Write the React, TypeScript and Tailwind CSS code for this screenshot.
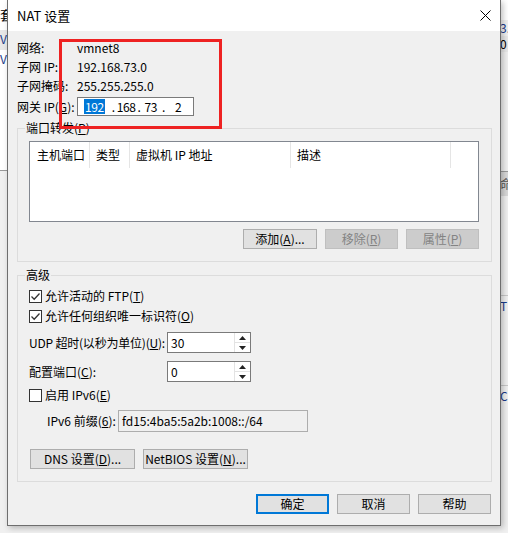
import React from 'react'

const font = { fontFamily: '"Noto Sans CJK SC", "Noto Sans", sans-serif' }

function Btn({ children, disabled, primary, className = '' }: { children: React.ReactNode; disabled?: boolean; primary?: boolean; className?: string }) {
  const tone = disabled
    ? 'bg-[#cccccc] border-[#bfbfbf] text-[#838383]'
    : primary
      ? 'bg-[#e1e1e1] border-2 border-[#0078d7] text-black'
      : 'bg-[#e1e1e1] border-[#adadad] text-black'
  return (
    <div className={`h-[20px] flex items-center justify-center border text-[12px] leading-none whitespace-nowrap ${tone} ${className}`}>
      {children}
    </div>
  )
}

function Check({ checked }: { checked?: boolean }) {
  return (
    <div className="w-[13px] h-[13px] border border-[#333333] bg-white flex items-center justify-center shrink-0">
      {checked && (
        <svg width="11" height="11" viewBox="0 0 11 11">
          <polyline points="1.5,5.5 4.2,8.2 9.5,2.5" fill="none" stroke="#333333" strokeWidth="1.3" />
        </svg>
      )}
    </div>
  )
}

function Spin({ value }: { value: string }) {
  return (
    <div className="w-[84px] h-[21px] border border-[#7a7a7a] bg-white flex shrink-0">
      <div className="flex-1 pl-[3px] flex items-center text-[12px]">{value}</div>
      <div className="w-[16px] flex flex-col border-l border-[#e3e3e3]">
        <div className="flex-1 flex items-center justify-center border-b border-[#e3e3e3]">
          <svg width="7" height="4" viewBox="0 0 7 4"><polygon points="0,4 7,4 3.5,0" fill="#222" /></svg>
        </div>
        <div className="flex-1 flex items-center justify-center">
          <svg width="7" height="4" viewBox="0 0 7 4"><polygon points="0,0 7,0 3.5,4" fill="#222" /></svg>
        </div>
      </div>
    </div>
  )
}

function Group({ title, className = '', children }: { title: React.ReactNode; className?: string; children: React.ReactNode }) {
  return (
    <div className={`relative border border-[#dcdcdc] ${className}`}>
      <div className="absolute -top-[9px] left-[7px] px-[1px] bg-[#f0f0f0] text-[12px] leading-[16px]">{title}</div>
      {children}
    </div>
  )
}

export default function App() {
  return (
    <div className="relative w-[508px] h-[533px] overflow-hidden bg-[#f0f0f0] text-black" style={font}>
      {/* the window behind the dialog */}
      <div className="flex h-full">
        <div className="w-[7px] flex flex-col overflow-hidden">
          <div className="h-[30px] bg-white text-[13px] leading-[30px] whitespace-nowrap">套</div>
          <div className="h-[20px] bg-[#e8e8e8] text-[12px] text-[#1a3a8a] whitespace-nowrap">V</div>
          <div className="h-[20px] bg-white text-[12px] text-[#1a3a8a] whitespace-nowrap">V</div>
          <div className="h-[100px] bg-white" />
          <div className="flex-1 border-t border-[#999]" />
        </div>
        <div className="flex-1" />
        <div className="w-[8px] flex flex-col overflow-hidden bg-[#f0f0f0] text-[12px] whitespace-nowrap">
          <div className="h-[20px] bg-white" />
          <div className="h-[16px] text-[#1a3a8a] leading-[16px]">3.</div>
          <div className="h-[16px] bg-[#e8e8e8] leading-[16px]">0</div>
          <div className="h-[120px] border-b border-[#999]" />
          <div className="h-[24px] bg-[#d8d8d8] leading-[24px] text-[#555]">命</div>
          <div className="h-[100px] border-b border-[#c8c8c8]" />
          <div className="h-[20px] leading-[20px] text-[#1a3a8a]">T</div>
          <div className="h-[70px] border-b border-[#c8c8c8]" />
          <div className="h-[20px] leading-[20px] text-[#1a3a8a]">C</div>
          <div className="flex-1" />
        </div>
      </div>

      {/* NAT 设置 dialog */}
      <div className="absolute left-[7px] top-0 w-[494px] h-[526px] flex flex-col border-x border-b border-[#6e6e6e] shadow-[2px_2px_6px_rgba(0,0,0,0.25)]">
        <div className="h-[31px] bg-white flex items-center justify-between pl-[9px] pr-[9px] shrink-0">
          <span className="text-[13px]">NAT 设置</span>
          <svg width="11" height="11" viewBox="0 0 11 11">
            <path d="M0.5 0.5 L10.5 10.5 M10.5 0.5 L0.5 10.5" stroke="#000" strokeWidth="1" />
          </svg>
        </div>

        <div className="flex-1 bg-[#f0f0f0] flex flex-col pl-[9px] pr-[8px] pt-[7px] text-[12px]">
          {/* network info */}
          <div className="flex flex-col">
            <div className="h-[19px] flex items-center"><span className="w-[60px]">网络:</span><span>vmnet8</span></div>
            <div className="h-[19px] flex items-center"><span className="w-[60px]">子网 IP:</span><span>192.168.73.0</span></div>
            <div className="h-[19px] flex items-center"><span className="w-[60px]">子网掩码:</span><span>255.255.255.0</span></div>
            <div className="h-[19px] mt-[2px] flex items-center">
              <span className="w-[60px] whitespace-nowrap">网关 IP(<u>G</u>):</span>
              <div className="w-[117px] h-[19px] border border-[#7a7a7a] bg-white flex items-center pl-[6px] tracking-[-0.4px]">
                <span className="bg-[#0078d7] text-white leading-[15px] px-[1px]">192</span>
                <span className="ml-[7px]">.</span>
                <span className="ml-[2px]">168</span>
                <span className="ml-[2px]">.</span>
                <span className="ml-[4px]">73</span>
                <span className="ml-[5px]">.</span>
                <span className="ml-[10px]">2</span>
              </div>
            </div>
          </div>

          {/* port forwarding */}
          <Group title={<>端口转发(<u>P</u>)</>} className="mt-[12px] h-[134px] shrink-0 pt-[12px] pl-[11px] pr-[12px]">
            <div className="h-[81px] border border-[#828790] bg-white">
              <div className="h-[26px] flex text-[12px] whitespace-nowrap">
                <div className="w-[60px] pl-[7px] flex items-center border-r border-[#e5e5e5]">主机端口</div>
                <div className="w-[40px] pl-[6px] flex items-center border-r border-[#e5e5e5]">类型</div>
                <div className="w-[161px] pl-[6px] flex items-center border-r border-[#e5e5e5]">虚拟机 IP 地址</div>
                <div className="w-[160px] pl-[6px] flex items-center border-r border-[#e5e5e5]">描述</div>
              </div>
            </div>
            <div className="mt-[7px] flex justify-end gap-[8px]">
              <Btn className="w-[74px]">添加(<u>A</u>)...</Btn>
              <Btn className="w-[73px]" disabled>移除(<u>R</u>)</Btn>
              <Btn className="w-[73px]" disabled>属性(<u>P</u>)</Btn>
            </div>
          </Group>

          {/* advanced */}
          <Group title="高级" className="mt-[13px] h-[207px] shrink-0 pt-[10px] pl-[11px] flex flex-col">
            <div className="h-[20px] flex items-center gap-[3px]"><Check checked /><span>允许活动的 FTP(<u>T</u>)</span></div>
            <div className="h-[20px] flex items-center gap-[3px]"><Check checked /><span>允许任何组织唯一标识符(<u>O</u>)</span></div>
            <div className="mt-[6px] flex items-center">
              <span className="w-[138px] whitespace-nowrap tracking-[-0.2px]">UDP 超时(以秒为单位)(<u>U</u>):</span>
              <Spin value="30" />
            </div>
            <div className="mt-[8px] flex items-center">
              <span className="w-[138px] whitespace-nowrap">配置端口(<u>C</u>):</span>
              <Spin value="0" />
            </div>
            <div className="mt-[3px] h-[20px] flex items-center gap-[3px]"><Check /><span>启用 IPv6(<u>E</u>)</span></div>
            <div className="mt-[5px] flex items-center pl-[18px]">
              <span className="w-[71px] whitespace-nowrap">IPv6 前缀(<u>6</u>):</span>
              <div className="w-[190px] h-[22px] border border-[#adadad] bg-[#f0f0f0] flex items-center pl-[3px]">fd15:4ba5:5a2b:1008::/64</div>
            </div>
            <div className="mt-[17px] flex gap-[8px] pl-[1px]">
              <Btn className="w-[105px]">DNS 设置(<u>D</u>)...</Btn>
              <Btn className="w-[105px]">NetBIOS 设置(<u>N</u>)...</Btn>
            </div>
          </Group>

          {/* dialog buttons */}
          <div className="mt-[12px] flex justify-end gap-[8px] pr-[1px]">
            <Btn className="w-[73px]" primary>确定</Btn>
            <Btn className="w-[73px]">取消</Btn>
            <Btn className="w-[73px]">帮助</Btn>
          </div>
        </div>
      </div>

      {/* red highlight around the address fields */}
      <div className="absolute left-[59px] top-[39px] w-[163px] h-[90px] border-[3px] border-[#ee2222]" />
    </div>
  )
}
